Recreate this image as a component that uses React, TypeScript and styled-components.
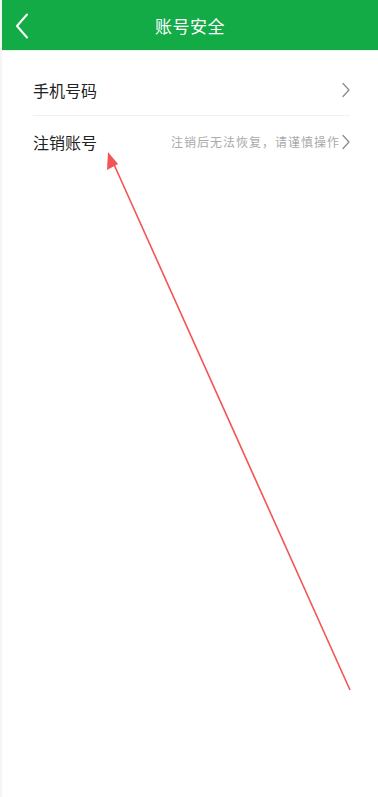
import styled, { createGlobalStyle } from "styled-components";

const GlobalStyle = createGlobalStyle`
  * { box-sizing: border-box; }
  html, body { margin: 0; padding: 0; background: #f5f5f5; }
  body {
    font-family: "Noto Sans CJK SC", "Noto Sans", sans-serif;
  }
`;

function Chevron({ color, size }: { color: string; size: number }) {
  return (
    <svg width={size / 2} height={size} viewBox="0 0 8 16" fill="none">
      <path d="M1 1.5 L7 8 L1 14.5" stroke={color} strokeWidth="1.2" strokeLinecap="round" strokeLinejoin="round" />
    </svg>
  );
}

function App() {
  return (
    <>
      <GlobalStyle />
      <Page>
        <Header>
          <BackButton>
            <svg width="14" height="26" viewBox="0 0 14 26" fill="none">
              <path d="M12 1.5 L2 13 L12 24.5" stroke="#fff" strokeWidth="2" strokeLinecap="round" strokeLinejoin="round" />
            </svg>
          </BackButton>
          <Title>账号安全</Title>
        </Header>
        <List>
          <Row>
            <Label>手机号码</Label>
            <Right>
              <Chevron color="#888" size={16} />
            </Right>
          </Row>
          <Row $last>
            <Label>注销账号</Label>
            <Right>
              <Hint>注销后无法恢复，请谨慎操作</Hint>
              <Chevron color="#888" size={16} />
            </Right>
          </Row>
        </List>
        <Annotation width="378" height="797" viewBox="0 0 378 797">
          <line x1="350" y1="690" x2="112" y2="160" stroke="#f25555" strokeWidth="1.6" />
          <polygon points="108,152 107,170 118,164" fill="#f25555" />
        </Annotation>
      </Page>
    </>
  );
}

export default App;

const Page = styled.div`
  position: relative;
  margin-left: 2px;
  width: 376px;
  height: 797px;
  background: #fff;
`;

const Header = styled.header`
  position: relative;
  display: flex;
  align-items: center;
  justify-content: center;
  height: 51px;
  background: #12ab46;
  border-bottom: 1px solid #e6f3ea;
`;

const BackButton = styled.div`
  position: absolute;
  left: 13px;
  top: 13px;
  display: flex;
`;

const Title = styled.h1`
  margin: 0;
  color: #fff;
  font-size: 17px;
  font-weight: 400;
  letter-spacing: 0.5px;
`;

const List = styled.div`
  display: flex;
  flex-direction: column;
  padding: 14px 28px 0 31px;
`;

const Row = styled.div<{ $last?: boolean }>`
  display: flex;
  align-items: center;
  justify-content: space-between;
  height: 51px;
  border-bottom: ${(p) => (p.$last ? "none" : "1px solid #f1f1f1")};
`;

const Label = styled.span`
  color: #222;
  font-size: 16px;
`;

const Right = styled.div`
  display: flex;
  align-items: center;
  gap: 2px;
`;

const Hint = styled.span`
  color: #aaa;
  font-size: 12px;
  letter-spacing: 1px;
`;

const Annotation = styled.svg`
  position: absolute;
  left: -2px;
  top: 0;
  pointer-events: none;
`;
